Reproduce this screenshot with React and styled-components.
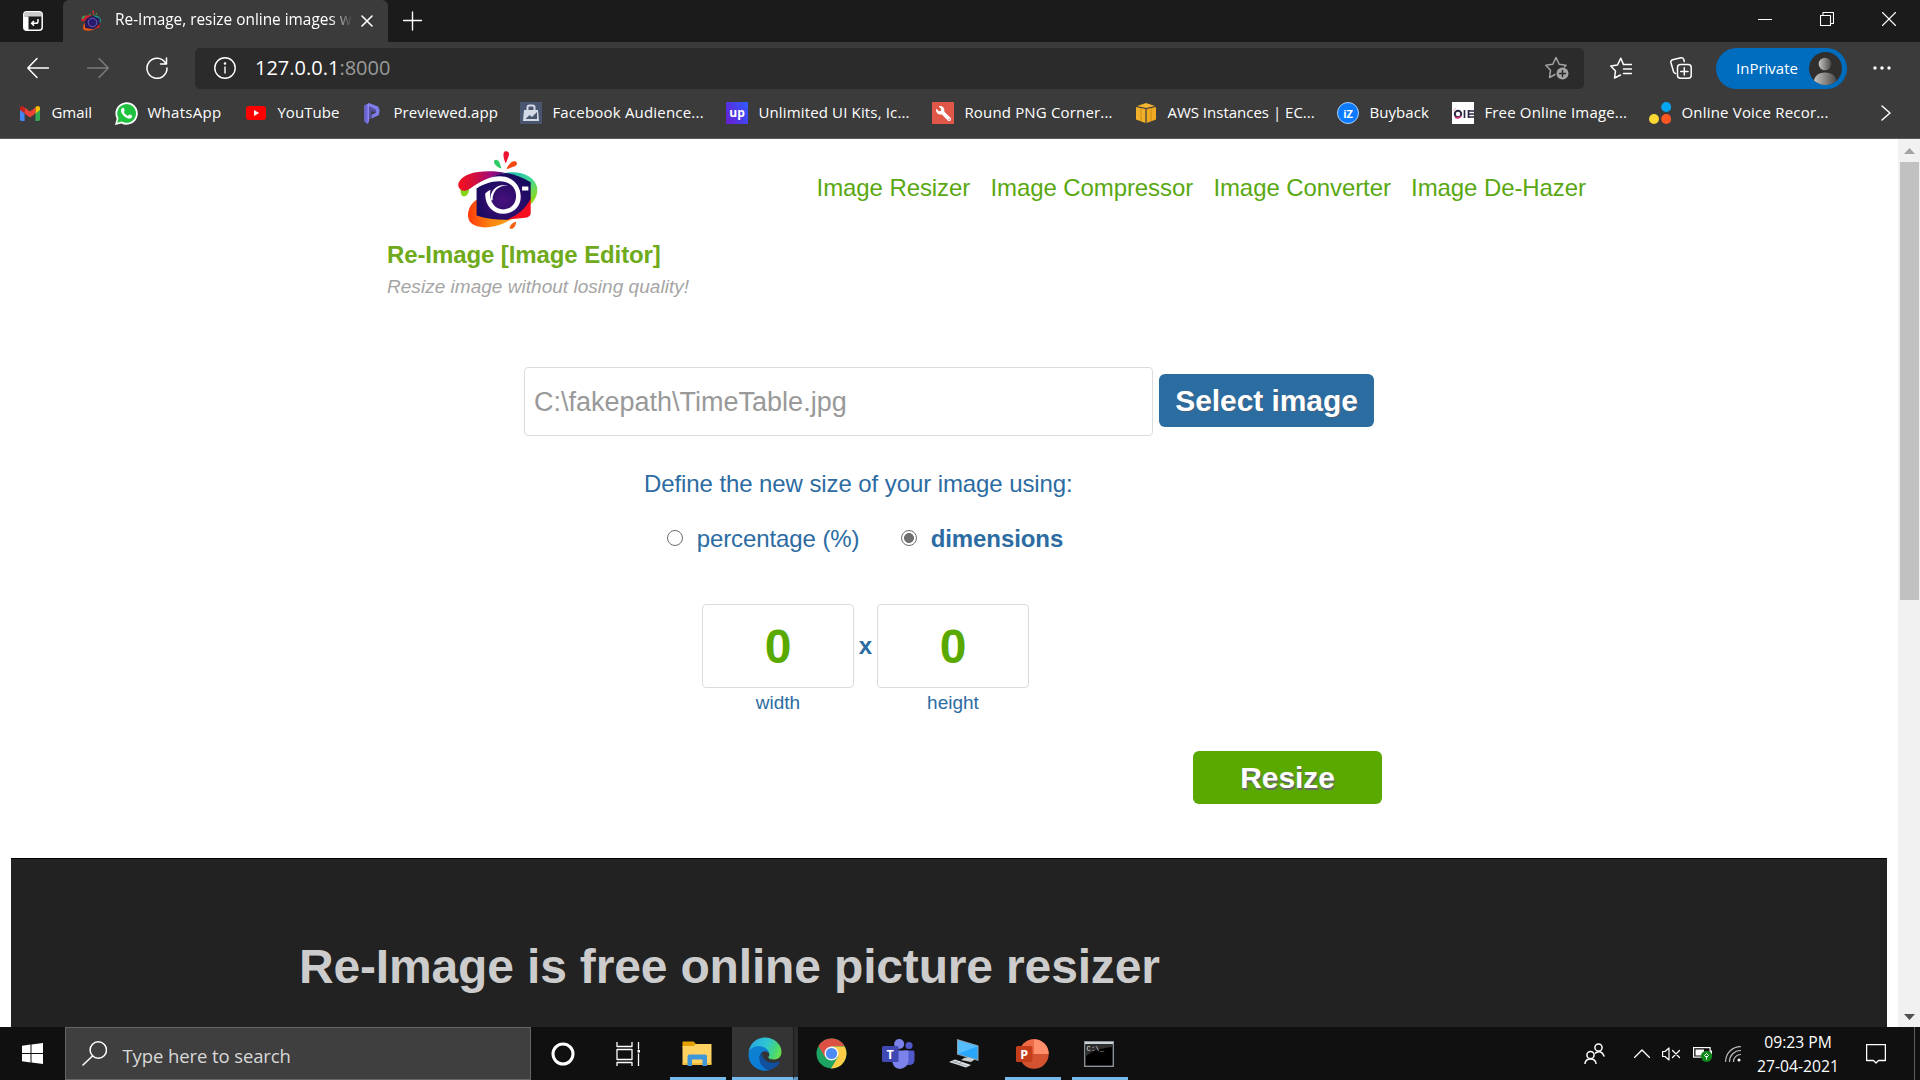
import React from "react";
import styled, { createGlobalStyle } from "styled-components";
import { FaWrench } from "react-icons/fa";

const UI = `"Open Sans", "Noto Sans", sans-serif`;
const ARIAL = `"Liberation Sans", Arial, sans-serif`;

const Global = createGlobalStyle`
  * { box-sizing: border-box; }
  html, body { margin: 0; padding: 0; background: #fff; overflow: hidden; }
  svg { display: block; flex: none; }
`;

const Screen = styled.div`
  width: 1920px;
  height: 1080px;
  display: flex;
  flex-direction: column;
  overflow: hidden;
  font-family: ${UI};
`;

/* ---------- browser chrome ---------- */
const TabStrip = styled.div`
  height: 42px;
  background: #1b1b1b;
  display: flex;
  align-items: flex-start;
`;
const TabActions = styled.div`
  width: 63px;
  padding: 11px 0 0 23px;
`;
const Tab = styled.div`
  width: 325px;
  height: 42px;
  background: #3b3b3b;
  border-radius: 6px 6px 0 0;
  display: flex;
  align-items: center;
  padding: 0 16px 0 17px;
  color: #fff;
`;
const TabTitle = styled.span`
  margin: 0 0 2px 13px;
  width: 242px;
  flex: none;
  white-space: nowrap;
  font-size: 15.4px;
  line-height: 24px;
  mask-image: linear-gradient(90deg, #000 215px, transparent 238px);
`;
const TabClose = styled.div`
  margin-left: 4px;
`;
const NewTab = styled.div`
  padding: 11px 0 0 15px;
`;
const WindowControls = styled.div`
  margin-left: auto;
  display: flex;
  gap: 48px;
  padding: 12px 24px 0 0;
`;
const Toolbar = styled.div`
  height: 52px;
  background: #3b3b3b;
  display: flex;
  align-items: center;
  padding: 0 0 0 27px;
`;
const NavButtons = styled.div`
  display: flex;
  gap: 37.5px;
  width: 168px;
  flex: none;
`;
const AddressBar = styled.div`
  width: 1389px;
  height: 41px;
  flex: none;
  margin-top: 1px;
  background: #2b2b2b;
  border-radius: 5px;
  display: flex;
  align-items: center;
  padding: 0 15px 1px 19px;
`;
const Url = styled.span`
  margin: 0 0 1px 19px;
  flex: 1;
  font-size: 20px;
  line-height: 28px;
  color: #fff;
`;
const Port = styled.span`
  color: #9a9a9a;
`;
const ToolbarIcons = styled.div`
  display: flex;
  gap: 38px;
  margin-left: 26px;
`;
const InPrivate = styled.div`
  margin: 1px 0 0 24px;
  width: 131px;
  height: 41px;
  flex: none;
  border-radius: 21px;
  background: #006cbe;
  color: #fff;
  display: flex;
  align-items: center;
  justify-content: space-between;
  padding: 0 5px 0 20px;
  font-size: 15px;
  letter-spacing: 0;
`;
const PillLabel = styled.span`
  margin-bottom: 2px;
`;
const More = styled.div`
  margin-left: 26px;
`;
const Bookmarks = styled.div`
  height: 45px;
  background: #3b3b3b;
  border-bottom: 1px solid #5a5a5a;
  display: flex;
  align-items: center;
  padding: 0 0 6px 19px;
`;
const Bookmark = styled.div`
  width: ${(p) => p.$w}px;
  flex: none;
  display: flex;
  align-items: center;
  gap: 10.4px;
  font-size: 15px;
  line-height: 22px;
  letter-spacing: ${(p) => p.$ls || 0}px;
  color: #fff;
  white-space: nowrap;
`;
const BookmarkLabel = styled.span`
  margin-bottom: 2px;
`;
const IconBox = styled.div`
  width: 22px;
  height: 22px;
  flex: none;
  display: flex;
  align-items: center;
  justify-content: center;
  background: ${(p) => p.$bg || "none"};
  border-radius: ${(p) => p.$r || 0};
  border: ${(p) => (p.$ring ? `1px solid ${p.$ring}` : "0")};
  color: #fff;
  font-weight: 700;
  font-size: ${(p) => p.$fs || 12}px;
  letter-spacing: 0;
  line-height: 1;
`;
const Wrench = styled(FaWrench)`
  width: 15px;
  height: 15px;
  transform: scaleX(-1);
`;

/* ---------- web page ---------- */
const Viewport = styled.div`
  height: 888px;
  display: flex;
  background: #fff;
  overflow: hidden;
`;
const Page = styled.div`
  width: 1898px;
  font-family: ${ARIAL};
  padding: 0 11px;
`;
const Header = styled.header`
  display: flex;
  height: 228px;
  padding-left: 376px;
`;
const Brand = styled.div`
  width: 429.6px;
  flex: none;
  padding-top: 12px;
`;
const LogoWrap = styled.div`
  padding-left: 70px;
  height: 80px;
`;
const BrandName = styled.div`
  margin-top: 10px;
  font-size: 24px;
  line-height: 28px;
  font-weight: 700;
  letter-spacing: -0.1px;
  color: #6eaa1b;
`;
const Tagline = styled.div`
  margin-top: 7px;
  font-size: 19px;
  line-height: 22px;
  letter-spacing: 0.03px;
  font-style: italic;
  color: #a5a5a5;
`;
const Menu = styled.nav`
  display: flex;
  gap: 20.3px;
  padding-top: 35px;
  font-size: 24px;
  line-height: 28px;
  letter-spacing: -0.09px;
  color: #59a812;
  white-space: nowrap;
`;
const FileRow = styled.div`
  display: flex;
  align-items: center;
  gap: 6px;
  padding-left: 513px;
`;
const FileField = styled.input`
  width: 629px;
  height: 69px;
  border: 1px solid #dcdcdc;
  border-radius: 4px;
  padding: 2px 9px 0;
  font: 27px ${ARIAL};
  color: #999;
  background: #fff;
  outline: none;
`;
const Button = styled.button`
  width: ${(p) => p.$w}px;
  height: 53px;
  margin-bottom: ${(p) => p.$mb || 0}px;
  border: 0;
  border-radius: 6px;
  padding: 0;
  background: ${(p) => p.$bg};
  color: #fff;
  font: 700 30px/34px ${ARIAL};
  letter-spacing: -0.07px;
  text-shadow: ${(p) => p.$shadow};
`;
const Options = styled.section`
  padding: 34px 0 0 633px;
  color: #2c6ca2;
  font-size: 24px;
  line-height: 28px;
  letter-spacing: -0.09px;
`;
const Radios = styled.div`
  display: flex;
  padding: 27px 0 0 23px;
`;
const RadioLabel = styled.label`
  width: ${(p) => p.$w}px;
  display: flex;
  align-items: center;
  gap: 13.7px;
  white-space: nowrap;
  font-weight: ${(p) => (p.$bold ? 700 : 400)};
`;
const Radio = styled.input`
  appearance: none;
  width: 16px;
  height: 16px;
  margin: 0 0 2px;
  border: 1px solid #6b6b6b;
  border-radius: 50%;
  background: #fff;
  &:checked {
    background: radial-gradient(circle, #6f6f6f 0 4.6px, #fff 5.3px);
  }
`;
const Dimensions = styled.div`
  display: flex;
  padding: 51px 0 0 58px;
`;
const Dimension = styled.label`
  display: flex;
  flex-direction: column;
  align-items: center;
  width: 152px;
  font-size: 19px;
  line-height: 22px;
  letter-spacing: 0;
`;
const NumberBox = styled.input`
  width: 152px;
  height: 84px;
  margin-bottom: 4px;
  border: 1px solid #dcdcdc;
  border-radius: 4px;
  padding: 0;
  text-align: center;
  font: 700 48px ${ARIAL};
  color: #59a900;
  outline: none;
`;
const Times = styled.span`
  width: 23px;
  text-align: center;
  font-weight: 700;
  padding-top: 28px;
`;
const Submit = styled.div`
  padding: 37px 0 0 1182px;
`;
const About = styled.section`
  margin-top: 54px;
  height: 169px;
  border-top: 1px solid #000;
  background: #222;
  padding: 80px 0 0 288px;
`;
const AboutTitle = styled.h1`
  margin: 0;
  font-size: 48px;
  line-height: 56px;
  letter-spacing: -0.16px;
  color: #ccc;
`;
const Scrollbar = styled.div`
  width: 22px;
  background: #f1f1f1;
  display: flex;
  flex-direction: column;
  align-items: center;
  justify-content: space-between;
  padding: 9px 0 7px;
`;
const ScrollTop = styled.div`
  display: flex;
  flex-direction: column;
  align-items: center;
  gap: 8px;
`;
const Thumb = styled.div`
  width: 19px;
  height: 438px;
  background: #c1c1c1;
`;

/* ---------- taskbar ---------- */
const Taskbar = styled.div`
  height: 53px;
  background: #101010;
  display: flex;
  color: #fff;
`;
const Slot = styled.div`
  width: ${(p) => p.$w}px;
  flex: none;
  height: 53px;
  margin-left: ${(p) => p.$ml || 0}px;
  display: flex;
  align-items: center;
  justify-content: center;
  padding: 3px ${(p) => p.$pr || 0}px 0 ${(p) => p.$pl || 0}px;
  background: ${(p) => p.$bg || "none"};
  border-bottom: 3px solid ${(p) => (p.$open ? "#76b9ed" : "transparent")};
`;
const Sheet = styled.div`
  width: 5px;
  height: 53px;
  background: #2b2b2b;
  border-left: 1px solid #1c1c1c;
  border-bottom: 3px solid #6299c4;
`;
const Search = styled.div`
  width: 466px;
  flex: none;
  height: 53px;
  background: #3f3f3f;
  border: 1px solid #666;
  display: flex;
  align-items: center;
  padding-left: 16px;
  color: #d8d8d8;
  font-size: 18.5px;
  letter-spacing: -0.1px;
`;
const SearchText = styled.span`
  margin-left: 15.5px;
  padding-top: 4px;
`;
const Tray = styled.div`
  margin-left: auto;
  display: flex;
  align-items: center;
  height: 53px;
`;
const TrayIcon = styled.div`
  margin-right: ${(p) => p.$mr}px;
`;
const Clock = styled.div`
  width: 96px;
  margin-right: 20px;
  text-align: center;
  font-size: 15.7px;
  line-height: 24px;
  padding-top: 1px;
`;
const ShowDesktop = styled.div`
  width: 6px;
  height: 53px;
  border-left: 1px solid #5c5c5c;
`;

/* ---------- drawings ---------- */
const Line = ({ w, h = w, d, sw = 1.5, c = "#fff", children }) => (
  <svg width={w} height={h} viewBox={`0 0 ${w} ${h}`} fill="none" stroke={c} strokeWidth={sw} strokeLinecap="round" strokeLinejoin="round">
    {d && <path d={d} />}
    {children}
  </svg>
);

const CameraLogo = ({ w, h, id }) => (
  <svg width={w} height={h} viewBox="0 0 242 238">
    <defs>
      <linearGradient id={id + "a"} x1="0" x2="1"><stop offset="0" stopColor="#f5101c" /><stop offset=".35" stopColor="#d3103f" /><stop offset=".7" stopColor="#a00a7c" /><stop offset="1" stopColor="#45107a" /></linearGradient>
      <linearGradient id={id + "b"} x1="0" y1="0" x2=".6" y2="1"><stop offset="0" stopColor="#19b9b0" /><stop offset=".5" stopColor="#3fd79a" /><stop offset="1" stopColor="#8cdb1c" /></linearGradient>
      <linearGradient id={id + "c"} x1="0" x2="1"><stop offset="0" stopColor="#ff3a0c" /><stop offset=".5" stopColor="#fb8210" /><stop offset="1" stopColor="#f6a81c" /></linearGradient>
      <radialGradient id={id + "d"} cx=".5" cy=".6" r=".6"><stop offset="0" stopColor="#48107c" /><stop offset="1" stopColor="#140a5c" /></radialGradient>
    </defs>
    <path d="M146 38 C138 20 136 5 144 1 C153-1 158 6 155 14 Z" fill="#ed1232" />
    <path d="M133 53 C119 48 108 38 111 29 C116 23 124 28 127 35 Z" fill="#2fc968" />
    <path d="M148 55 C154 40 164 29 175 31 C183 35 180 44 170 47 Z" fill="#f4460f" />
    <path d="M10 116 L34 108 C38 120 32 136 20 137 C11 136 9 126 10 116Z" fill="#84d717" />
    <path d="M145 66 C190 58 232 76 240 108 C244 130 234 148 221 161 L206 95 Z" fill={`url(#${id}b)`} />
    <path d="M58 146 C28 168 24 206 46 221 C75 240 135 227 166 203 L70 188 Z" fill={`url(#${id}c)`} />
    <path d="M221 140 V188 Q220 198 205 201 L145 207 C170 198 200 175 221 140Z" fill="#f80e1e" />
    <path d="M58 112 C85 82 120 68 145 66 Q180 70 221 94 V144 C205 175 180 194 150 207 Q100 208 58 194 Z" fill={`url(#${id}d)`} />
    <path d="M12 118 C-6 106 3 82 35 70 C65 58 118 60 145 66 C105 74 60 96 40 112 C30 119 20 122 12 118Z" fill={`url(#${id}a)`} />
    <path d="M34 132 C58 92 98 76 128 76 C166 76 191 103 191 138 C191 170 166 189 138 189 C108 189 83 166 84 128 L92 121 L100 117 C94 150 112 176 138 176 C162 176 177 158 177 135 C177 109 157 91 128 91 C94 91 62 105 34 132Z" fill="#fff" />
    <path d="M101 148 C97 118 120 98 152 103 C126 104 106 118 106 148Z" fill="#fff" />
    <rect x="195" y="107" width="19" height="12" fill="#fff" />
    <path d="M157 232 C160 220 168 215 177 213 C176 226 170 236 160 234Z" fill="#f0600e" />
  </svg>
);

const SmallCamera = () => (
  <svg width="22" height="22" viewBox="0 0 22 22">
    <path d="M13.200 5 12.300 1Q13 0 14 1L13.800 5Z" fill="#e5322a" />
    <path d="M10 5.500 8.500 3.500 10.800 4.500ZM15 5.200 17 2.800 17.300 4.200Z" fill="#4fbf3a" />
    <path d="M1 9.500Q3 4.500 12 5.500L5 11Q1 12.500 1 9.500Z" fill="#c6232f" />
    <path d="M1.500 8Q3 5.500 6 5.300L3 9Z" fill="#2fae5a" />
    <path d="M13 5.500Q20 5 21 10 21 12.500 19.500 14Z" fill="#1c9a8c" />
    <path d="M5 13Q1.500 17 4 20 9 22 15 19Z" fill="#ee5a12" />
    <path d="M19.500 12.500V17.500L14 19Z" fill="#d8201c" />
    <path d="M5 10.500Q9 6 13 6L19.700 8.500V13.500Q17 17.500 13 19.200L5 18Z" fill="#241a5c" />
    <circle cx="12.500" cy="12.500" r="4.300" fill="#2a1a70" stroke="#6d62a8" strokeWidth="1" />
  </svg>
);

const GmailIcon = () => (
  <svg width="20" height="15" viewBox="0 0 20 15">
    <path d="M0 2.500V13.600Q0 15 1.400 15H4.600V6Z" fill="#4285f4" />
    <path d="M20 2.500V13.600Q20 15 18.600 15H15.400V6Z" fill="#34a853" />
    <path d="M15.400 1.600V7.400L20 4V2.200C20 .1 17.600-.6 16.200.6Z" fill="#fbbc04" />
    <path d="M4.600 7.400V1.600L10 5.600 15.400 1.600V7.400L10 11.500Z" fill="#ea4335" />
    <path d="M0 4 4.600 7.400V1.600L3.800.6C2.400-.6 0 .1 0 2.200Z" fill="#c5221f" />
  </svg>
);
const WhatsAppIcon = () => (
  <svg width="23" height="23" viewBox="0 0 23 23">
    <path d="M0 23 1.700 16.800A11.200 11.200 0 1 1 6.300 21.400Z" fill="#fff" />
    <path d="M2.200 20.800 3.500 16.200A9.400 9.400 0 1 1 6.900 19.600Z" fill="#1fc13f" />
    <path d="M7.100 6.200C8 5.300 8.700 5.700 9 6.500L9.700 8.200Q9.800 8.800 8.700 9.900 10 12.600 13 13.900L14.100 12.600Q14.500 12.300 15 12.500L16.900 13.400Q17.400 13.700 17.100 14.700C16.500 16.400 14.600 17 12.700 16.300 9.500 15.200 7.300 12.700 6.200 10.300 5.600 8.600 6.100 7 7.100 6.200Z" fill="#fff" />
  </svg>
);
const YouTubeIcon = () => (
  <svg width="20" height="14" viewBox="0 0 20 14"><rect width="20" height="14" rx="3" fill="#f00" /><path d="M8 4V10L13.200 7Z" fill="#fff" /></svg>
);
const PreviewedIcon = () => (
  <svg width="16" height="21" viewBox="0 0 16 21">
    <path d="M.5 2.500 5 0V18.500L3.500 21 .5 18.500Z" fill="#8d87f0" />
    <path d="M5 0 14 3.500Q15.500 5 15.500 9 15.500 12 13 13L7.500 15.500V12L12 9.500V7L5 3.500Z" fill="#7f7cec" />
    <path d="M5 3.500 12 7V9.500L7.500 8V15.500L5 16.500Z" fill="#54509c" />
    <path d="M3.500 1V21L.5 18.500V2.500Z" fill="#6b64d6" />
  </svg>
);
const AudienceIcon = () => (
  <svg width="22" height="22" viewBox="0 0 22 22">
    <rect width="22" height="22" fill="#4a5570" />
    <path d="M7.500 8V5.500Q7.500 3.500 9.500 3.500H12.500Q14.500 3.500 14.500 5.500V8" fill="none" stroke="#d5dbe6" strokeWidth="2" />
    <path d="M4 8H18L19 19H3Z" fill="#d5dbe6" />
    <path d="M5.500 17 9.500 13 12 15 17 10V17Z" fill="#4a5570" />
  </svg>
);
const AwsIcon = () => (
  <svg width="20" height="20" viewBox="0 0 20 20">
    <path d="M0 4 9.400 6V20L0 16.500Z" fill="#f0b02a" /><path d="M20 4 10.600 6V20L20 16.500Z" fill="#eeaa22" />
    <path d="M1 3 10 0 19 3 10 5Z" fill="#f2b530" /><path d="M5 5V18.300M15 5V18.300" stroke="#c4830c" strokeWidth=".8" />
  </svg>
);
const OieIcon = () => (
  <svg width="22" height="22" viewBox="0 0 22 22">
    <rect width="22" height="22" fill="#fff" />
    <circle cx="6" cy="12" r="3.200" fill="none" stroke="#2b2744" strokeWidth="2" />
    <path d="M1 9 4 6" stroke="#eaa" strokeWidth="1" /><path d="M3 15Q6 17.500 9 14" stroke="#dc2d7f" strokeWidth="1.500" fill="none" />
    <path d="M12.500 8V16M16.500 8V16M16.500 9H22M16.500 12H22M16.500 15H22" stroke="#2b2744" strokeWidth="1.700" />
  </svg>
);
const VoiceIcon = () => (
  <svg width="22" height="22" viewBox="0 0 22 22"><circle cx="17.200" cy="5" r="5" fill="#03a4f0" /><circle cx="5" cy="17" r="5" fill="#fdd835" /><circle cx="17.200" cy="17" r="5" fill="#ff5722" /></svg>
);

const EdgeIcon = () => (
  <svg width="34" height="34" viewBox="0 0 34 34">
    <defs>
      <linearGradient id="e1" x1="0" y1=".3" x2="1" y2=".6"><stop offset="0" stopColor="#27a9e6" /><stop offset=".5" stopColor="#2fc5d2" /><stop offset=".8" stopColor="#45d57d" /><stop offset="1" stopColor="#68e04e" /></linearGradient>
      <linearGradient id="e2" x1="0" y1="0" x2=".6" y2="1"><stop offset="0" stopColor="#0f83cf" /><stop offset="1" stopColor="#0a7ad8" /></linearGradient>
    </defs>
    <path d="M.5 15C2 6 9 .5 17 .5 26 .5 33.500 7 33.500 15 33.500 20 30 22.500 25.500 22.500 22 22.500 20 21.300 20.300 20 21.500 18.800 21.500 17.500 21 16 19.500 12.500 15 10 10.500 10 6 10 2 12 .5 15Z" fill="url(#e1)" />
    <path d="M.5 18C.5 12.500 5 9 10.500 9 16 9 20.800 12.500 21.200 16.500 19 12.500 12.500 13.500 11.500 20 11 27 17 32.500 22 33 13 36 .5 29.500.5 18Z" fill="url(#e2)" />
    <path d="M14 15.500C9.500 20.500 11.500 30 20 33 25 33 30 29 31.500 25.500 31.800 24.500 31 24.200 30 24.700 22 28 14 23.500 14 15.500Z" fill="#10509e" />
  </svg>
);
const ChromeIcon = () => (
  <svg width="31" height="31" viewBox="0 0 31 31">
    <circle cx="15.500" cy="15.500" r="15" fill="#1da462" />
    <path d="M2.500 8A15 15 0 0 1 28.500 8L15.500 8.500 9 19.200Z" fill="#dd5144" />
    <path d="M15.500 8.500H28.700A15 15 0 0 1 15 30.500L22 19Z" fill="#ffcd46" />
    <circle cx="15.500" cy="15.500" r="7" fill="#f4f4f4" /><circle cx="15.500" cy="15.500" r="5.600" fill="#4c8bf5" />
  </svg>
);
const TeamsIcon = () => (
  <svg width="33" height="30" viewBox="0 0 33 30">
    <circle cx="27" cy="6.500" r="3.600" fill="#5059c9" /><path d="M22 11.500H31Q32.500 11.500 32.500 13V21.500Q32 26 27 26H22Z" fill="#5059c9" />
    <circle cx="17.200" cy="5" r="5" fill="#7b83eb" /><path d="M10 11.500H25.500Q26.500 11.500 26.500 12.500V21.500Q26 29 18 30 11 29.500 10 21.500Z" fill="#7b83eb" />
    <rect y="7" width="16.500" height="16" rx="1.500" fill="#4048b4" />
    <text x="8.200" y="19.500" textAnchor="middle" fontFamily="Open Sans, sans-serif" fontWeight="700" fontSize="12.500" fill="#fff">T</text>
  </svg>
);
const PptIcon = () => (
  <svg width="33" height="30" viewBox="0 0 33 30">
    <circle cx="18" cy="15" r="14.700" fill="#d35230" /><path d="M3.300 15A14.700 14.700 0 0 1 18 .3V15Z" fill="#ed6c47" /><path d="M18 .3A14.700 14.700 0 0 1 32.700 15H18Z" fill="#ff8f6b" />
    <rect y="7" width="16.500" height="16" rx="1.500" fill="#c43e1c" />
    <text x="8.200" y="19.500" textAnchor="middle" fontFamily="Open Sans, sans-serif" fontWeight="700" fontSize="12.500" fill="#fff">P</text>
  </svg>
);
const FolderIcon = () => (
  <svg width="30" height="26" viewBox="0 0 30 26">
    <path d="M.5 1.500Q.5.500 1.500.5H11.500L14 3V6H.5Z" fill="#e5a100" /><path d="M.5 5H11.500L14 3H29.500V23H.5Z" fill="#ffd262" /><path d="M.5 22H29.500V24H.5Z" fill="#f2bb3a" />
    <path d="M5.500 25V15.500Q5.500 13.500 7.500 13.500H23Q25 13.500 25 15.500V25H20.500V18.500H10V25Z" fill="#3e97d8" />
  </svg>
);
const PcIcon = () => (
  <svg width="30" height="29" viewBox="0 0 30 29">
    <path d="M8 0 29.500 6.500V22L8 15.500Z" fill="#8fa3ae" /><path d="M9 1.500 28.500 7.300V20.500L9 14.900Z" fill="#2aa6fa" /><path d="M9 1.500 28.500 7.300 9 14.900Z" fill="#55bdfd" />
    <path d="M18 18 25 20V21L17 20Z M12 21 16 18.500 25 21 22 23Z" fill="#c8ced2" />
    <path d="M0 23 6 20.500 22 26 17 28.500Z" fill="#dfe4e7" /><path d="M3 22 19 27.500M9 25.500 13 23M5 24 9 21.500" stroke="#8d979d" strokeWidth=".8" />
  </svg>
);
const CmdIcon = () => (
  <svg width="30" height="26" viewBox="0 0 30 26">
    <rect x=".7" y=".7" width="28.600" height="24.600" fill="#000" stroke="#8b9196" strokeWidth="1.400" /><path d="M1 1H29V3.200H1Z" fill="#ccd3d8" />
    <path d="M1.500 3.500H28.500V6Q8 8 1.500 16Z" fill="#303030" />
    <text x="2.500" y="9.800" fontFamily="Liberation Mono, monospace" fontSize="7" letterSpacing=".2" fill="#ddd">C:\_</text>
  </svg>
);

const bookmarks = [
  { t: "Gmail", w: 96, i: <IconBox><GmailIcon /></IconBox> },
  { t: "WhatsApp", w: 130, ls: 0.3, i: <IconBox><WhatsAppIcon /></IconBox> },
  { t: "YouTube", w: 116, ls: 0.08, i: <IconBox><YouTubeIcon /></IconBox> },
  { t: "Previewed.app", w: 159, ls: 0.12, i: <IconBox><PreviewedIcon /></IconBox> },
  { t: "Facebook Audience...", w: 206, ls: 0.2, i: <IconBox><AudienceIcon /></IconBox> },
  { t: "Unlimited UI Kits, Ic...", w: 206, ls: 0.15, i: <IconBox $bg="linear-gradient(60deg,#6a1bd0,#2e5cff)">up</IconBox> },
  { t: "Round PNG Corner...", w: 203, ls: 0.17, i: <IconBox $bg="#e05647"><Wrench /></IconBox> },
  { t: "AWS Instances | EC...", w: 202, i: <IconBox><AwsIcon /></IconBox> },
  { t: "Buyback", w: 115, ls: 0.08, i: <IconBox $bg="#0d7bff" $r="50%" $ring="#a8d0ff" $fs={11}>iZ</IconBox> },
  { t: "Free Online Image...", w: 197, ls: 0.17, i: <IconBox><OieIcon /></IconBox> },
  { t: "Online Voice Recor...", w: 232, ls: 0.2, i: <IconBox><VoiceIcon /></IconBox> },
];

export default function App() {
  return (
    <Screen>
      <Global />
      <TabStrip>
        <TabActions>
          <svg width="20" height="20" viewBox="0 0 20 20">
            <rect x=".8" y=".8" width="18.400" height="18.400" rx="3" fill="none" stroke="#fff" strokeWidth="1.500" />
            <path d="M1 4Q1 1 4 1H16Q19 1 19 4V5.500H1Z" fill="#ccc" /><path d="M1 5.500H5.500V19H3.500Q1 19 1 16.500Z" fill="#fff" />
            <path d="M15 8V10.500Q15 12.300 13 12.300H9M11 10 8.600 12.300 11 14.600" fill="none" stroke="#fff" strokeWidth="1.500" />
          </svg>
        </TabActions>
        <Tab>
          <SmallCamera />
          <TabTitle>Re-Image, resize online images w</TabTitle>
          <TabClose><Line w={12} d="M1 1 11 11M11 1 1 11" sw={1.6} /></TabClose>
        </Tab>
        <NewTab><Line w={20} d="M9.500 1V19M.5 9.500H18.500" sw={1.4} /></NewTab>
        <WindowControls>
          <Line w={14} d="M0 7.500H14" sw={1} />
          <Line w={14} sw={1.1}><path d="M.5 3.500H10.500V13.500H.5ZM3 3V.5H13.500V11.500H11" /></Line>
          <Line w={14} d="M.5.500 13.500 13.500M13.500.500.500 13.500" sw={1.1} />
        </WindowControls>
      </TabStrip>

      <Toolbar>
        <NavButtons>
          <Line w={22} d="M21.500 11H1M10 1.500.800 11 10 20.500" />
          <Line w={22} d="M.5 11H21M12 1.500 21.200 11 12 20.500" c="#7b7b7b" />
          <Line w={22} d="M19.500 6A10 10 0 1 0 21 11M20.500 1V7H14.500" />
        </NavButtons>
        <AddressBar>
          <Line w={22} sw={1.4}><circle cx="11" cy="11" r="10.200" /><path d="M11 10V16" /><circle cx="11" cy="6.500" r=".6" fill="#fff" /></Line>
          <Url>127.0.0.1<Port>:8000</Port></Url>
          <Line w={24} c="#a3a3a3">
            <path d="M10 18.500 4.500 21.500 5.500 14.300.800 9.300 7.800 8.200 11 1.500 14.200 8.200 21 9.300 19.500 11" />
            <circle cx="17.500" cy="17.500" r="6" fill="#a3a3a3" stroke="none" /><path d="M17.500 14.500V20.500M14.500 17.500H20.500" stroke="#2b2b2b" />
          </Line>
        </AddressBar>
        <ToolbarIcons>
          <Line w={22}>
            <path d="M10.500 18 4.500 21 5.500 14 .8 9 7.500 8 10.800 1.200 13.500 7.500" /><path d="M13.500 7.500H21.500M13.500 12H21.500M13.500 16.500H21.500" />
          </Line>
          <Line w={22}>
            <path d="M5.500 16.500Q4 16 3.500 14.500L.9 5.500Q.500 3.500 2.500 2.800L11 .8Q13 .500 13.800 2.500L14.300 4.500" />
            <rect x="7.500" y="7.500" width="13.700" height="13.700" rx="3" /><path d="M14.300 10.800V18M10.700 14.400H18" />
          </Line>
        </ToolbarIcons>
        <InPrivate>
          <PillLabel>InPrivate</PillLabel>
          <svg width="33" height="33" viewBox="0 0 33 33">
            <defs><linearGradient id="av"><stop offset="0" stopColor="#c9c5c2" /><stop offset="1" stopColor="#4a4745" /></linearGradient><clipPath id="ac"><circle cx="16.500" cy="16.500" r="16.500" /></clipPath></defs>
            <circle cx="16.500" cy="16.500" r="16.500" fill="#302f2e" />
            <g clipPath="url(#ac)" fill="url(#av)"><circle cx="16" cy="12" r="6.300" /><path d="M4.500 33C4.500 24 9 20.500 16 20.500 23 20.500 28 24 28 33Z" /></g>
          </svg>
        </InPrivate>
        <More><svg width="18" height="4"><g fill="#fff"><circle cx="2" cy="2" r="1.700" /><circle cx="9" cy="2" r="1.700" /><circle cx="16" cy="2" r="1.700" /></g></svg></More>
      </Toolbar>

      <Bookmarks>
        {bookmarks.map((b) => (
          <Bookmark key={b.t} $w={b.w} $ls={b.ls}>{b.i}<BookmarkLabel>{b.t}</BookmarkLabel></Bookmark>
        ))}
        <Line w={10} h={16} d="M1 1 9 8 1 15" />
      </Bookmarks>

      <Viewport>
        <Page>
          <Header>
            <Brand>
              <LogoWrap><CameraLogo w={81} h={79} id="l" /></LogoWrap>
              <BrandName>Re-Image [Image Editor]</BrandName>
              <Tagline>Resize image without losing quality!</Tagline>
            </Brand>
            <Menu>
              <span>Image Resizer</span>
              <span>Image Compressor</span>
              <span>Image Converter</span>
              <span>Image De-Hazer</span>
            </Menu>
          </Header>
          <FileRow>
            <FileField readOnly value="C:\fakepath\TimeTable.jpg" />
            <Button $w={215} $mb={2} $bg="#2b6da0" $shadow="1px 1px 0 #4a5f78">Select image</Button>
          </FileRow>
          <Options>
            Define the new size of your image using:
            <Radios>
              <RadioLabel $w={234}><Radio type="radio" name="m" />percentage (%)</RadioLabel>
              <RadioLabel $bold><Radio type="radio" name="m" defaultChecked />dimensions</RadioLabel>
            </Radios>
            <Dimensions>
              <Dimension><NumberBox readOnly value="0" />width</Dimension>
              <Times>x</Times>
              <Dimension><NumberBox readOnly value="0" />height</Dimension>
            </Dimensions>
          </Options>
          <Submit>
            <Button $w={189} $bg="#59a900" $shadow="1px 2px 1px #666">Resize</Button>
          </Submit>
          <About><AboutTitle>Re-Image is free online picture resizer</AboutTitle></About>
        </Page>
        <Scrollbar>
          <ScrollTop>
            <svg width="11" height="6"><path d="M0 6 5.500 0 11 6Z" fill="#a3a3a3" /></svg>
            <Thumb />
          </ScrollTop>
          <svg width="11" height="6"><path d="M0 0 5.500 6 11 0Z" fill="#505050" /></svg>
        </Scrollbar>
      </Viewport>

      <Taskbar>
        <Slot $w={65}>
          <svg width="21" height="21" viewBox="0 0 21 21"><path d="M0 2.800 8.500 1.500V9.900H0ZM9.500 1.400 21 0V9.900H9.500ZM0 11H8.500V19.400L0 18.200ZM9.500 11H21V21L9.500 19.500Z" fill="#fff" /></svg>
        </Slot>
        <Search>
          <Line w={25}><circle cx="16.300" cy="9" r="8.200" /><path d="M10.500 15 1 24" /></Line>
          <SearchText>Type here to search</SearchText>
        </Search>
        <Slot $w={64}><Line w={24} sw={3}><circle cx="12" cy="12" r="10" /></Line></Slot>
        <Slot $w={66}>
          <Line w={25} h={24} sw={1.3}><path d="M1 0V4.500H16V0M1 7.500H16V17.500H1ZM1 24V20.500H16V24M22.500 0V7M22.500 12V24" /><rect x="21.500" y="8" width="2.500" height="2.500" fill="#fff" stroke="none" /></Line>
        </Slot>
        <Slot $w={56} $ml={9} $pr={2} $open><FolderIcon /></Slot>
        <Slot $w={61} $ml={6} $pl={4} $open $bg="#343434"><EdgeIcon /></Slot>
        <Sheet />
        <Slot $w={56} $ml={5}><ChromeIcon /></Slot>
        <Slot $w={56} $ml={11}><TeamsIcon /></Slot>
        <Slot $w={56} $ml={11} $pr={2}><PcIcon /></Slot>
        <Slot $w={56} $ml={12} $pr={2} $open><PptIcon /></Slot>
        <Slot $w={56} $ml={11} $pr={2} $open><CmdIcon /></Slot>
        <Tray>
          <TrayIcon $mr={29}>
            <Line w={21}><circle cx="14.500" cy="4.500" r="3.600" /><path d="M11.500 10Q17.500 6.500 20 13" /><circle cx="6.500" cy="12" r="3.600" /><path d="M1 20.500Q1.500 16 6.500 16 11.500 16 12 20.500" /></Line>
          </TrayIcon>
          <TrayIcon $mr={12}><Line w={16} h={9} d="M.5 8.500 8 1 15.500 8.500" sw={1.4} /></TrayIcon>
          <TrayIcon $mr={13}><Line w={18} h={14} sw={1.2} d="M.6 4.500H3L7 1V13L3 9.500H.6ZM10.500 3.500 17.500 10.500M17.500 3.500 10.500 10.500" /></TrayIcon>
          <TrayIcon $mr={12}>
            <svg width="20" height="16" viewBox="0 0 20 16"><rect x=".6" y="1.600" width="16.500" height="9.500" fill="none" stroke="#fff" strokeWidth="1.200" /><path d="M2.500 3.500H11V9.500H2.500ZM17.500 4.500H19V8.500H17.500Z" fill="#fff" /><circle cx="13.500" cy="10.300" r="5.600" fill="#108a1c" /><path d="M13.500 13.500V10M13.500 7.500 11.500 9.500 13.500 11.500 15.500 9.500Z" fill="none" stroke="#fff" /></svg>
          </TrayIcon>
          <TrayIcon $mr={9}>
            <Line w={16} sw={1.2} c="#bbb"><path d="M.6 15.500A15 15 0 0 1 15.500.6M4.500 15.500A11 11 0 0 1 15.500 4.500M8.500 15.500A7 7 0 0 1 15.500 8.500" /><circle cx="14" cy="14" r="1.500" fill="#fff" stroke="none" /></Line>
          </TrayIcon>
          <Clock>09:23 PM<br />27-04-2021</Clock>
          <TrayIcon $mr={28}><Line w={20} h={20} sw={1.3} d="M.6.600H19.400V16.500H12.500L10 19 7.500 16.500H.6Z" /></TrayIcon>
          <ShowDesktop />
        </Tray>
      </Taskbar>
    </Screen>
  );
}
